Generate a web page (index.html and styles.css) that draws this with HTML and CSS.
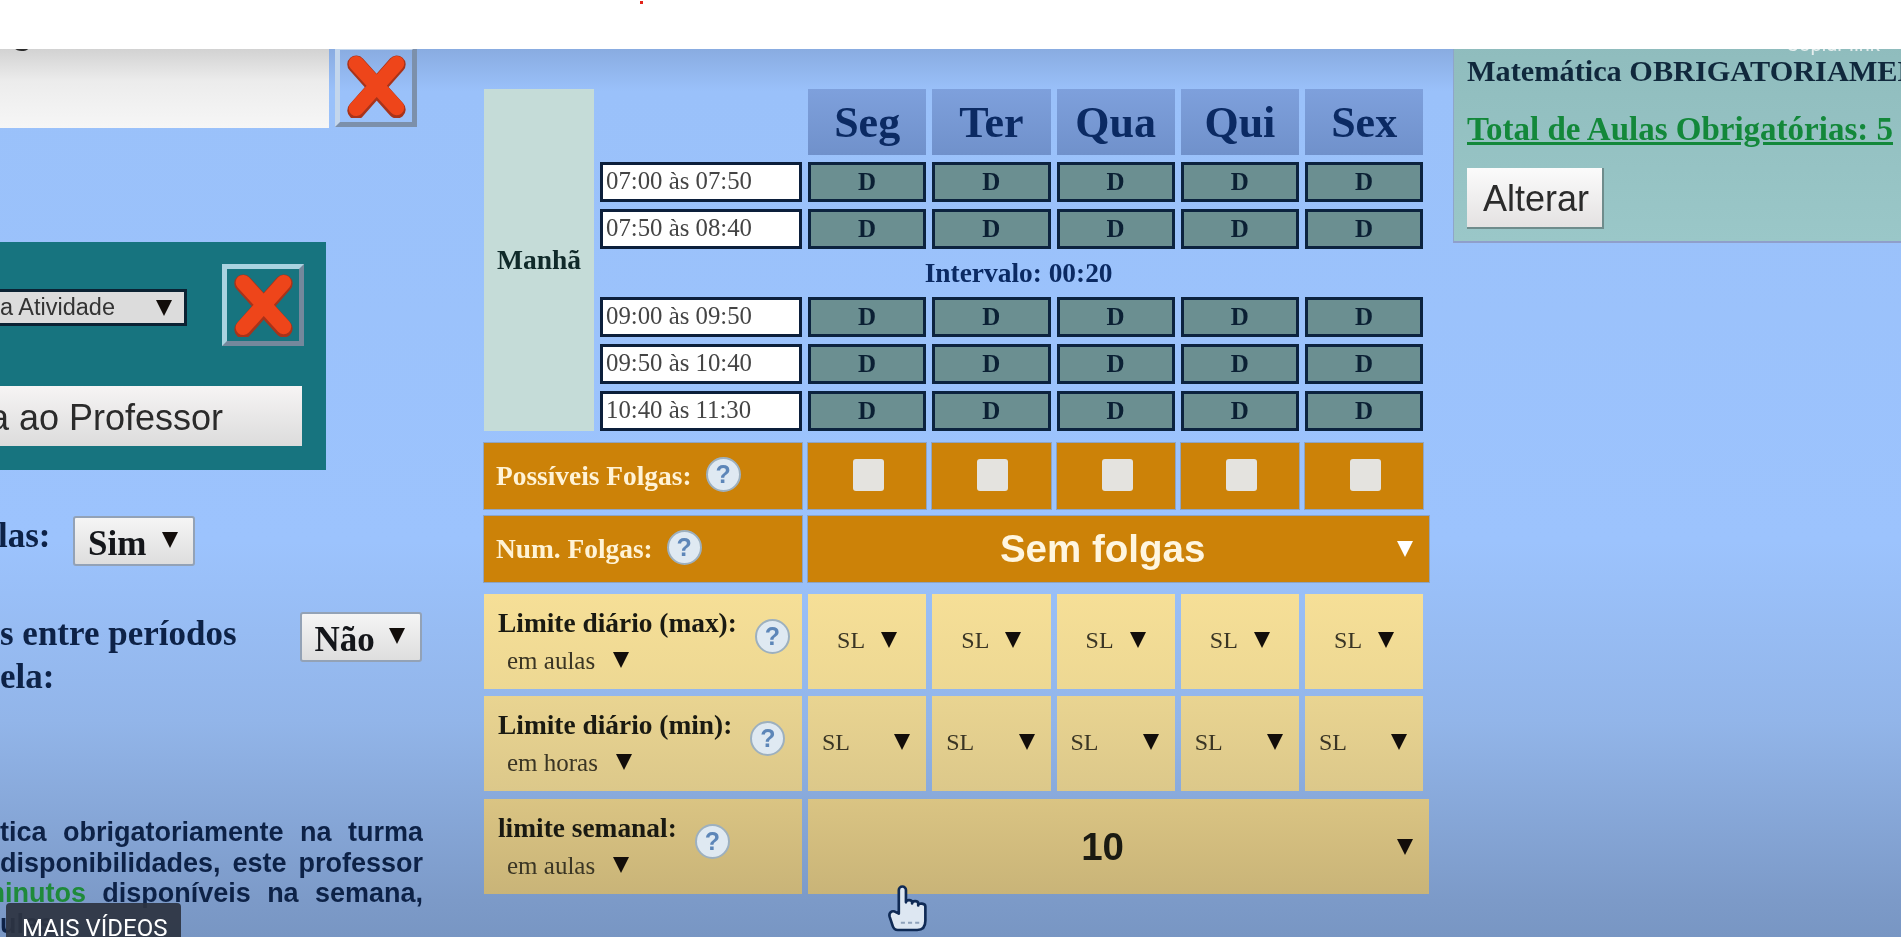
FILE: index.html
```html
<!DOCTYPE html>
<html lang="pt-BR">
<head>
    <meta charset="UTF-8">
    <meta name="viewport" content="width=device-width, initial-scale=1.0">
    <title>Disponibilidade do Professor</title>
    <link rel="stylesheet" href="styles.css">
</head>
<body>
    <header class="top-bar"><span class="red-dot"></span></header>

    <main class="page">
        <section class="left-col">
            <div class="subject-row">
                <button class="subject-btn"><span>o</span></button>
                <button class="x-box">
                    <svg viewBox="0 0 64 68"><path class="x-shadow" d="M11 60 54 11M11 11 54 59"/><path class="x-mark" d="M11 58 54 10M11 10 54 57"/></svg>
                </button>
            </div>

            <div class="teal-panel">
                <div class="teal-row">
                    <div class="activity-select">a Atividade<i class="arrow"></i></div>
                    <button class="x-box x-box-teal">
                        <svg viewBox="0 0 64 68"><path class="x-shadow" d="M11 60 54 11M11 11 54 59"/><path class="x-mark" d="M11 58 54 10M11 10 54 57"/></svg>
                    </button>
                </div>
                <button class="assign-btn">a ao Professor</button>
            </div>

            <div class="option-row option-sim">
                <label>las:</label>
                <div class="yes-no">Sim<i class="arrow"></i></div>
            </div>

            <div class="option-row option-nao">
                <label>s entre períodos<br>ela:</label>
                <div class="yes-no">Não<i class="arrow"></i></div>
            </div>

            <div class="note">
                <p>tica obrigatoriamente na turma</p>
                <p>disponibilidades, este professor</p>
                <p class="shift"><span class="green">minutos</span> disponíveis na semana,</p>
                <p class="last">ulas</p>
            </div>
        </section>

        <section class="schedule">
            <div class="morning">
                <div class="period">Manhã</div>
                <div class="slots">
                    <div class="week-row head-row">
                        <div></div>
                        <div class="day">Seg</div><div class="day">Ter</div><div class="day">Qua</div><div class="day">Qui</div><div class="day">Sex</div>
                    </div>
                    <div class="week-row">
                        <div class="time">07:00 às 07:50</div>
                        <div class="slot">D</div><div class="slot">D</div><div class="slot">D</div><div class="slot">D</div><div class="slot">D</div>
                    </div>
                    <div class="week-row">
                        <div class="time">07:50 às 08:40</div>
                        <div class="slot">D</div><div class="slot">D</div><div class="slot">D</div><div class="slot">D</div><div class="slot">D</div>
                    </div>
                    <div class="break-row">Intervalo: 00:20</div>
                    <div class="week-row">
                        <div class="time">09:00 às 09:50</div>
                        <div class="slot">D</div><div class="slot">D</div><div class="slot">D</div><div class="slot">D</div><div class="slot">D</div>
                    </div>
                    <div class="week-row">
                        <div class="time">09:50 às 10:40</div>
                        <div class="slot">D</div><div class="slot">D</div><div class="slot">D</div><div class="slot">D</div><div class="slot">D</div>
                    </div>
                    <div class="week-row">
                        <div class="time">10:40 às 11:30</div>
                        <div class="slot">D</div><div class="slot">D</div><div class="slot">D</div><div class="slot">D</div><div class="slot">D</div>
                    </div>
                </div>
            </div>

            <div class="limit-row orange first-orange">
                <div class="cell-label">Possíveis Folgas:<span class="help">?</span></div>
                <div class="cell"><span class="check"></span></div>
                <div class="cell"><span class="check"></span></div>
                <div class="cell"><span class="check"></span></div>
                <div class="cell"><span class="check"></span></div>
                <div class="cell"><span class="check"></span></div>
            </div>

            <div class="limit-row orange second-orange">
                <div class="cell-label">Num. Folgas:<span class="help">?</span></div>
                <div class="cell wide">
                    <span class="wide-value">Sem folgas</span><i class="arrow arrow-white"></i>
                </div>
            </div>

            <div class="limit-row sand row-max">
                <div class="cell-label">
                    <div class="stack"><b>Limite diário (max):</b><span class="unit">em aulas<i class="arrow"></i></span></div>
                    <span class="help">?</span>
                </div>
                <div class="cell sl"><span>SL</span><i class="arrow"></i></div>
                <div class="cell sl"><span>SL</span><i class="arrow"></i></div>
                <div class="cell sl"><span>SL</span><i class="arrow"></i></div>
                <div class="cell sl"><span>SL</span><i class="arrow"></i></div>
                <div class="cell sl"><span>SL</span><i class="arrow"></i></div>
            </div>

            <div class="limit-row sand row-min">
                <div class="cell-label">
                    <div class="stack"><b>Limite diário (min):</b><span class="unit">em horas<i class="arrow"></i></span></div>
                    <span class="help">?</span>
                </div>
                <div class="cell sl sl-spread"><span>SL</span><i class="arrow"></i></div>
                <div class="cell sl sl-spread"><span>SL</span><i class="arrow"></i></div>
                <div class="cell sl sl-spread"><span>SL</span><i class="arrow"></i></div>
                <div class="cell sl sl-spread"><span>SL</span><i class="arrow"></i></div>
                <div class="cell sl sl-spread"><span>SL</span><i class="arrow"></i></div>
            </div>

            <div class="limit-row sand row-week">
                <div class="cell-label">
                    <div class="stack"><b>limite semanal:</b><span class="unit">em aulas<i class="arrow"></i></span></div>
                    <span class="help">?</span>
                </div>
                <div class="cell wide">
                    <span class="wide-value">10</span><i class="arrow"></i>
                </div>
            </div>

            <svg class="hand" viewBox="0 0 40 46">
                <path d="M11 25V5a3.5 3.5 0 0 1 7 0V17c0-3 6-3 6 0v1c0-3 6-3 6 0v2c0-3 7-2 7 1v14c0 6-3 9-8 9H10c-3 0-4-1-5-4l-3-9c-1-4 2-6 5-5l4 2z"/>
                <path class="hand-dash" d="M13 37h4M20 37h4M27 37h4"/>
            </svg>
        </section>

        <aside class="summary">
            <p class="summary-text">Matemática OBRIGATORIAMENTE</p>
            <p class="summary-total">Total de Aulas Obrigatórias: 5</p>
            <button class="change-btn">Alterar</button>
        </aside>

        <span class="copy-link">Copiar link</span>
        <div class="more-videos">MAIS VÍDEOS</div>
    </main>
</body>
</html>
```

FILE: styles.css
```css
* {
    box-sizing: border-box;
}

html, body {
    height: 100%;
}

body {
    margin: 0;
    overflow: hidden;
    background-color: #fff;
    font-family: "Liberation Serif", serif;
    color: #0d2247;
}

button {
    padding: 0;
    font-family: "Liberation Sans", sans-serif;
    color: #2b2b2b;
}

p {
    margin: 0;
}

.top-bar {
    position: relative;
    z-index: 2;
    height: 49px;
    padding: 1px 0 0 640px;
    background-color: #fff;
}

.red-dot {
    display: block;
    width: 3px;
    height: 3px;
    background-color: #e2231a;
}

.page {
    position: relative;
    display: flex;
    height: 896px;
    margin-top: -8px;
    overflow: hidden;
    background: linear-gradient(#86a8dc 0, #9ac1fa 50px, #9cc3fd 500px, #92b5e9 680px, #7c9ac8 860px, #7896c3 100%);
    filter: blur(0.7px);
}

.arrow {
    display: inline-block;
    flex: none;
    width: 0;
    height: 0;
    border-left: 8.5px solid transparent;
    border-right: 8.5px solid transparent;
    border-top: 16px solid #120d0a;
}

.arrow-white {
    border-top-color: #fff;
}

/* left column */
.left-col {
    flex: none;
    width: 423px;
    overflow: hidden;
}

.subject-row {
    display: flex;
    height: 87px;
    gap: 6px;
    width: 417px;
}

.subject-btn {
    display: block;
    width: 329px;
    height: 87px;
    padding-left: 10px;
    border: none;
    text-align: left;
    font-size: 42px;
    line-height: 18px;
    overflow: hidden;
    background: linear-gradient(#d2d2d2 8px, #ececec 40px, #f6f6f6 100%);
}

.subject-btn span {
    display: block;
    margin-top: -26px;
    height: 87px;
}

.subject-row .x-box {
    margin-top: 4px;
}

.x-box {
    flex: none;
    width: 82px;
    height: 82px;
    padding: 4px;
    border: 5px solid;
    border-color: #c3d6ec #7c90ab #7c90ab #c3d6ec;
    background: none;
}

.x-box svg {
    display: block;
    width: 100%;
    height: 100%;
}

.x-shadow, .x-mark {
    fill: none;
    stroke-linecap: round;
}

.x-shadow {
    stroke: #a8331a;
    stroke-width: 19;
}

.x-mark {
    stroke: #ee451a;
    stroke-width: 16;
}

.teal-panel {
    width: 326px;
    height: 228px;
    margin-top: 114px;
    padding: 22px 22px 0 0;
    background-color: #17747f;
}

.teal-row {
    display: flex;
    justify-content: flex-end;
    align-items: center;
    gap: 35px;
}

.x-box-teal {
    border-color: #a9d3e0 #74889c #74889c #a9d3e0;
}

.activity-select {
    display: flex;
    justify-content: space-between;
    align-items: center;
    width: 187px;
    height: 37px;
    margin-top: 4px;
    padding: 1px 12px 0 0;
    border: 3px solid #0b2233;
    border-left: none;
    background-color: #dcdcdc;
    font-family: "Liberation Sans", sans-serif;
    font-size: 23.5px;
    color: #333;
}

.assign-btn {
    display: flex;
    justify-content: flex-end;
    align-items: center;
    width: 302px;
    height: 60px;
    margin-top: 40px;
    padding: 4px 79px 0 0;
    border: none;
    white-space: nowrap;
    font-size: 36px;
    background: linear-gradient(#f6f4f4, #dcdcdc);
}

.option-row {
    display: flex;
    font-size: 35px;
    font-weight: bold;
}

.option-sim {
    gap: 22.5px;
    margin-top: 46px;
    line-height: 40px;
}

.option-sim label {
    margin-left: -2px;
}

.option-nao {
    gap: 63px;
    margin-top: 46px;
    line-height: 43px;
}

.yes-no {
    display: flex;
    justify-content: space-between;
    width: 122px;
    height: 50px;
    padding: 6px 15px 0 13px;
    border: 2px solid #93a2b6;
    border-radius: 3px;
    background: linear-gradient(#f5f5f5, #dedede);
    font-size: 35px;
    line-height: 40px;
    color: #14161a;
}

.yes-no .arrow {
    margin-top: 8px;
}

.note {
    margin-top: 119px;
    font-family: "Liberation Sans", sans-serif;
    font-size: 27px;
    font-weight: bold;
    line-height: 30.5px;
}

.note p {
    text-align: justify;
    text-align-last: justify;
    white-space: nowrap;
}

.note .shift {
    margin-left: -19px;
}

.note .last {
    text-align-last: left;
}

.green {
    color: #1f8a3a;
}

/* schedule */
.schedule {
    position: relative;
    flex: none;
    width: 945px;
    margin: 48px 0 0 61px;
}

.morning {
    display: flex;
    gap: 6px;
}

.period {
    display: flex;
    flex: none;
    width: 110px;
    height: 342px;
    justify-content: center;
    align-items: center;
    background-color: #c5dcd8;
    font-size: 27.5px;
    font-weight: bold;
    color: #102a2a;
}

.slots {
    flex: none;
}

.week-row {
    display: grid;
    grid-template-columns: 202px repeat(5, 118.25px);
    column-gap: 6px;
    height: 40px;
    margin-bottom: 7px;
}

.head-row {
    height: 66px;
}

.day {
    display: flex;
    justify-content: center;
    align-items: center;
    background: linear-gradient(#7ea0dc, #7091cb);
    font-size: 44px;
    font-weight: bold;
    color: #0b2a63;
}

.time {
    display: flex;
    align-items: center;
    padding: 0 0 2px 3px;
    border: 3px solid #0c1f3b;
    background-color: #fff;
    font-size: 24.8px;
    color: #444;
}

.slot {
    display: flex;
    justify-content: center;
    align-items: center;
    border: 3px solid #0c233f;
    background-color: #6b8f91;
    font-size: 25px;
    font-weight: bold;
    color: #0b2034;
}

.break-row {
    height: 34px;
    margin-bottom: 7px;
    padding-left: 14px;
    text-align: center;
    font-size: 27.4px;
    font-weight: bold;
    line-height: 34px;
    color: #0b2a63;
}

.morning .week-row:last-child {
    margin-bottom: 0;
}

.limit-row {
    display: grid;
    grid-template-columns: 318px repeat(5, 118.25px);
    column-gap: 6px;
    margin-top: 7px;
    height: 95px;
}

.cell-label {
    display: flex;
    align-items: center;
    gap: 18px;
    padding-left: 14px;
    font-size: 27.4px;
    font-weight: bold;
}

.cell {
    display: flex;
    justify-content: center;
    align-items: center;
}

.wide {
    grid-column: span 5;
    margin-right: -6px;
    padding-right: 16px;
}

.wide-value {
    flex: 1;
    text-align: center;
    font-family: "Liberation Sans", sans-serif;
    font-size: 38.5px;
    font-weight: bold;
}

.orange {
    height: 66px;
    color: #fff3d6;
}

.orange > div {
    background-color: #cc8208;
    box-shadow: 0 0 0 1px rgba(120, 110, 90, 0.35);
}

.first-orange {
    margin-top: 12px;
}

.orange .cell-label {
    gap: 14px;
    padding-left: 12px;
}

.orange .help {
    margin-top: -4px;
}

.orange .wide-value {
    color: #fff6e0;
}

.check {
    display: block;
    width: 31px;
    height: 32px;
    margin: -3px 0 0 3px;
    border-radius: 3px;
    background-color: #e4e3df;
}

.row-max {
    margin-top: 12px;
}

.row-week {
    margin-top: 8px;
}

.sand {
    color: #1a1a12;
}

.row-max > div {
    background: linear-gradient(#f6df97, #edd893);
}

.row-min > div {
    background: linear-gradient(#e9d491, #dcc88a);
}

.row-week > div {
    background: linear-gradient(#dac483, #c9b478);
}

.stack {
    display: flex;
    flex-direction: column;
    line-height: 37px;
}

.unit {
    display: flex;
    align-items: center;
    gap: 18px;
    padding-left: 9px;
    font-size: 25px;
    font-weight: normal;
    color: #3a3524;
}

.help {
    display: flex;
    flex: none;
    justify-content: center;
    align-items: center;
    width: 35px;
    height: 35px;
    margin-top: -10px;
    border: 2px solid #9db0bf;
    border-radius: 50%;
    background-color: #dfe9f2;
    font-family: "Liberation Sans", sans-serif;
    font-size: 25px;
    font-weight: bold;
    color: #5d86b8;
}

.sl {
    gap: 16px;
    font-size: 24px;
    color: #3a3524;
}

.sl span {
    margin-top: -3px;
}

.sl .arrow {
    margin-top: -4px;
}

.sl-spread {
    justify-content: space-between;
    padding: 0 16px 0 14px;
}

.hand {
    position: absolute;
    left: 400px;
    top: 796px;
    width: 48px;
    height: 47px;
}

.hand path {
    fill: #dde7f2;
    stroke: #0f2a55;
    stroke-width: 2.6;
    stroke-linejoin: round;
}

.hand .hand-dash {
    fill: none;
    stroke: #8ea2bb;
    stroke-width: 2;
}

/* right panel */
.summary {
    flex: 1;
    min-width: 0;
    height: 202px;
    margin-left: 24px;
    padding: 10px 0 14px 13px;
    overflow: hidden;
    white-space: nowrap;
    border-left: 1px solid #8fa5c9;
    border-bottom: 2px solid #8f9fcb;
    background: linear-gradient(#8fbcbd, #9ac7c8);
    font-weight: bold;
    line-height: 40px;
}

.summary-text {
    font-size: 30.3px;
    color: #10283c;
}

.summary-total {
    margin-top: 18px;
    font-size: 33px;
    color: #13883a;
    text-decoration: underline;
}

.change-btn {
    display: block;
    width: 137px;
    height: 61px;
    margin-top: 19px;
    padding: 3px 0 0 3px;
    border: none;
    border-right: 2px solid #6f8c8c;
    border-bottom: 2px solid #6f8c8c;
    background: linear-gradient(#fbfbfb, #e4e2e2);
    font-size: 36px;
}

/* video player overlays */
.copy-link {
    position: absolute;
    top: -9px;
    right: 21px;
    font-family: Roboto, sans-serif;
    font-size: 20px;
    line-height: 24px;
    color: #e6eeee;
}

.more-videos {
    position: absolute;
    left: 6px;
    bottom: 0;
    width: 175px;
    height: 34px;
    padding: 13px 0 0 16px;
    overflow: hidden;
    border-radius: 4px 4px 0 0;
    background-color: rgba(45, 52, 66, 0.93);
    font-family: Roboto, sans-serif;
    font-size: 24px;
    line-height: 24px;
    color: #fff;
}
```
